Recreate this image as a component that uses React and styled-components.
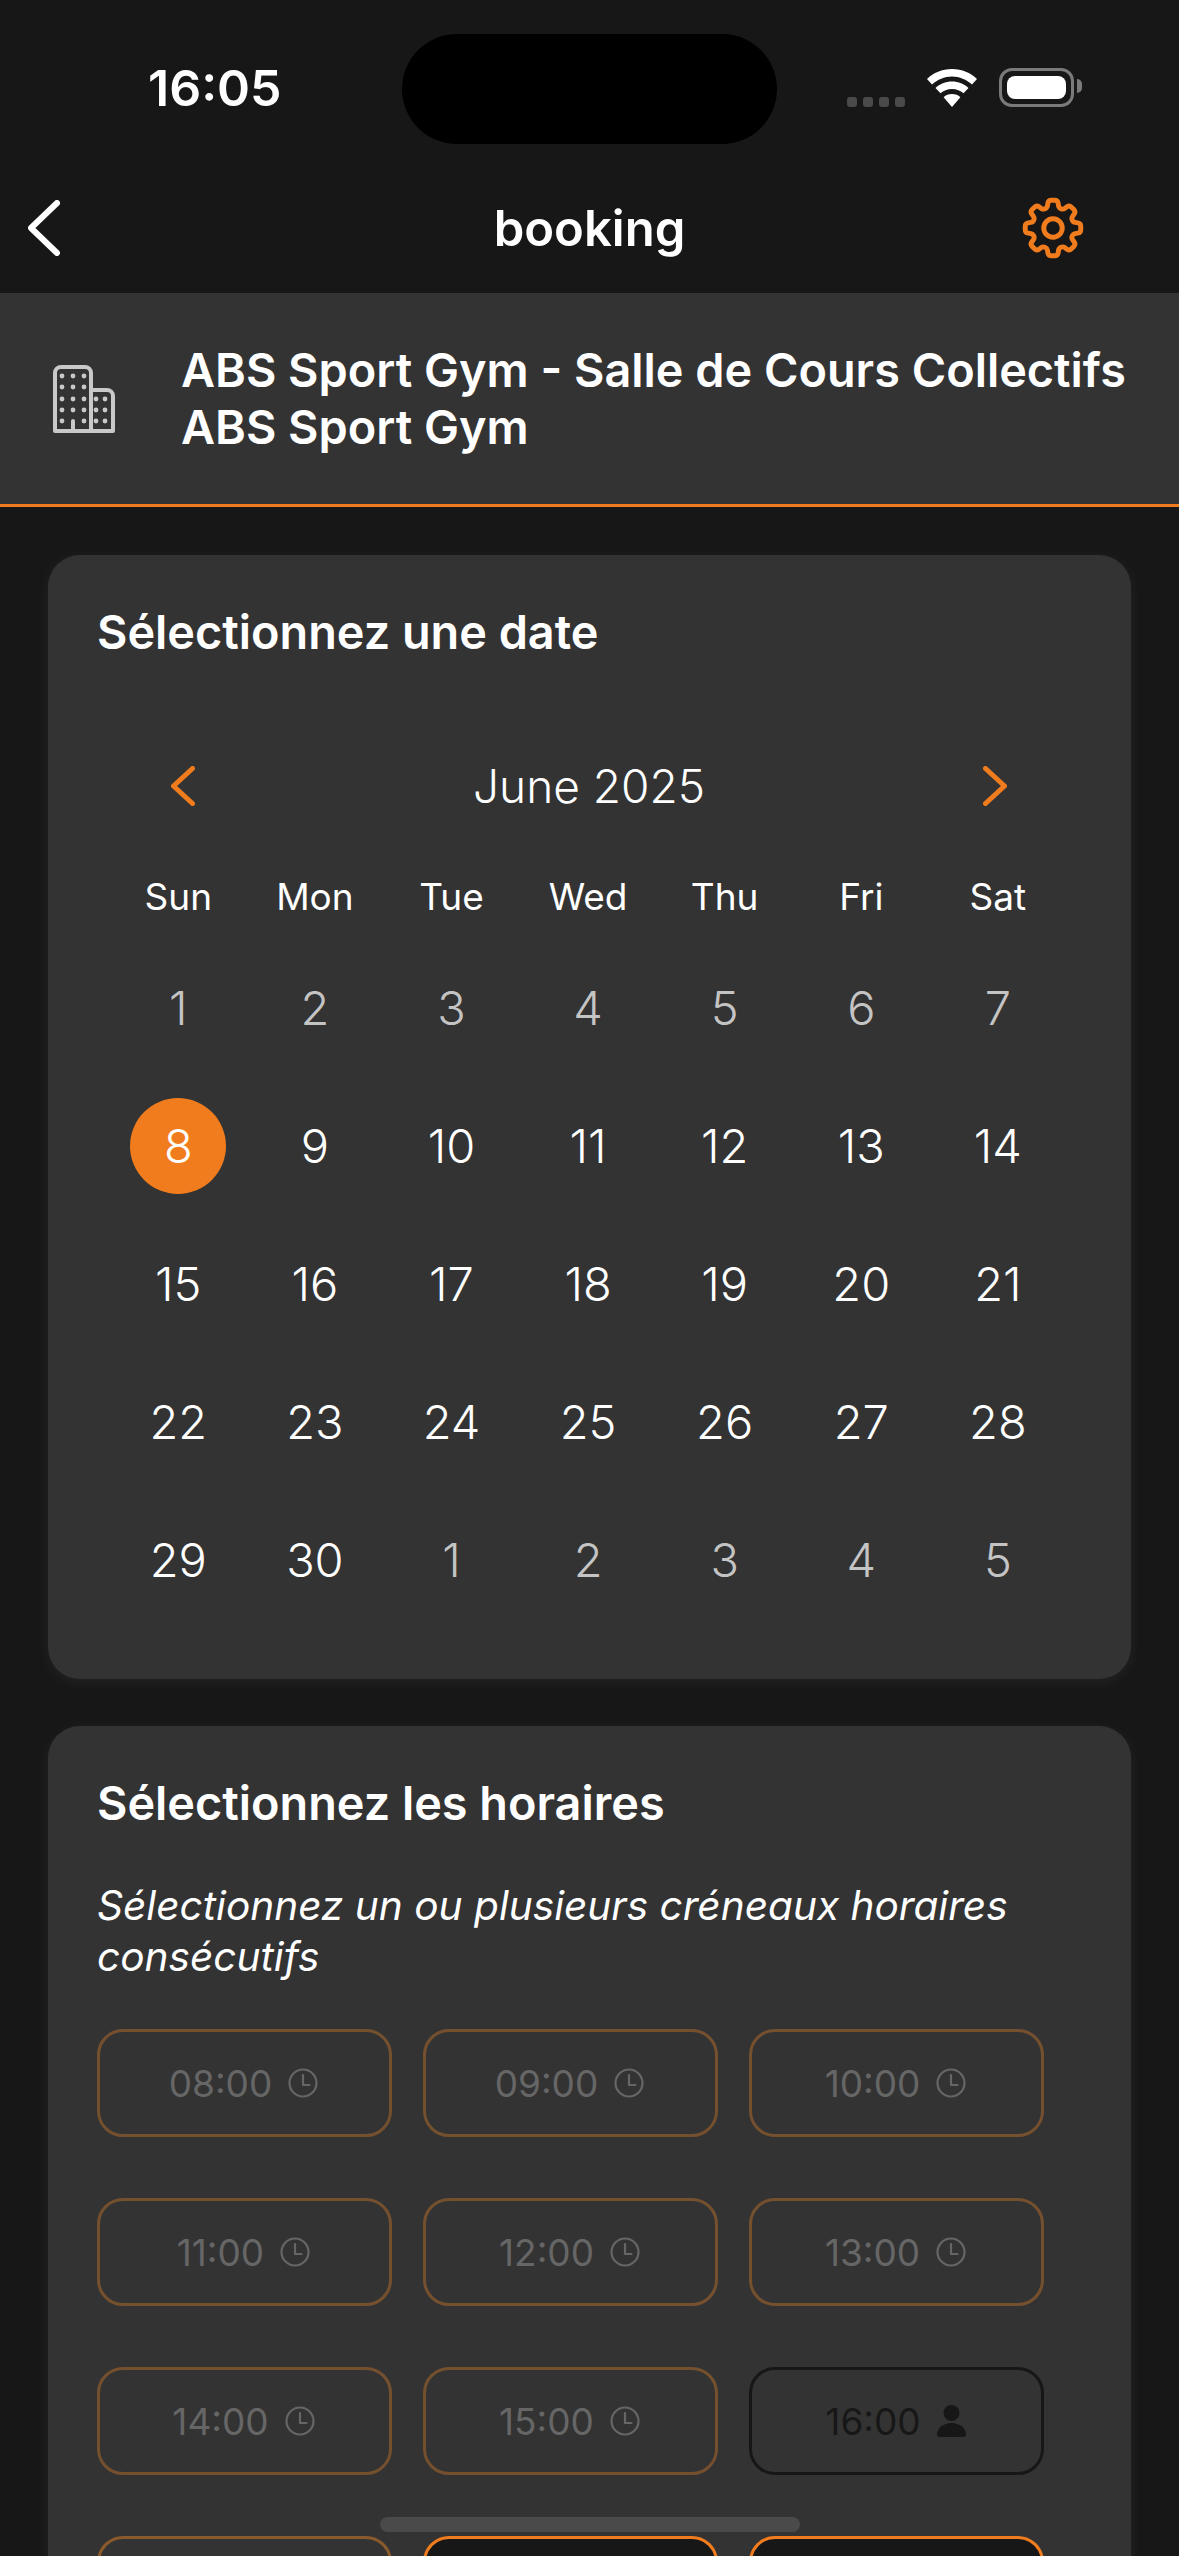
import React from "react";
import styled, { createGlobalStyle } from "styled-components";
import { HiOutlineCog8Tooth } from "react-icons/hi2";

const ORANGE = "#f07c1e";

const GlobalStyle = createGlobalStyle`
    html, body {
        margin: 0;
        padding: 0;
        background: #171717;
    }
    * {
        box-sizing: border-box;
    }
`;

const weekDays = ["Sun", "Mon", "Tue", "Wed", "Thu", "Fri", "Sat"];

const calendarDays = [
    [1, 2, 3, 4, 5, 6, 7].map((d) => ({ d, dim: true })),
    [8, 9, 10, 11, 12, 13, 14].map((d) => ({ d, selected: d === 8 })),
    [15, 16, 17, 18, 19, 20, 21].map((d) => ({ d })),
    [22, 23, 24, 25, 26, 27, 28].map((d) => ({ d })),
    [29, 30].map((d) => ({ d })).concat([1, 2, 3, 4, 5].map((d) => ({ d, dim: true }))),
].flat();

const slots = [
    { time: "08:00" },
    { time: "09:00" },
    { time: "10:00" },
    { time: "11:00" },
    { time: "12:00" },
    { time: "13:00" },
    { time: "14:00" },
    { time: "15:00" },
    { time: "16:00", state: "full" },
    { time: "17:00", state: "next" },
    { time: "18:00", state: "open" },
    { time: "19:00", state: "open" },
];

const WifiIcon = () => (
    <svg width="52" height="38" viewBox="0 0 52 38">
        <path d="M26 0C16 0 7.500 3.800 1 10l5 5.500C11.500 10.500 18.500 7.500 26 7.500s14.500 3 20 8l5-5.500C44.500 3.800 36 0 26 0z" fill="#fff" />
        <path d="M26 12.500c-6.500 0-12.300 2.500-16.500 6.500l5 5.300c3-2.800 7-4.400 11.500-4.400s8.500 1.600 11.500 4.400l5-5.300c-4.200-4-10-6.500-16.500-6.500z" fill="#fff" />
        <path d="M26 25c-3.300 0-6.200 1.200-8.400 3.200L26 38l8.400-9.800C32.200 26.200 29.300 25 26 25z" fill="#fff" />
    </svg>
);

const BuildingIcon = () => {
    const dotRows = [11, 22, 34, 45, 56];
    const dots = [];
    dotRows.forEach((y, r) => {
        [10, 21, 32].forEach((x, c) => {
            if (!(r === 4 && c === 1)) dots.push([x, y]);
        });
        if (r > 1) {
            dots.push([44, y]);
            dots.push([53, y]);
        }
    });
    return (
        <svg width="64" height="68" viewBox="0 0 64 68">
            <path
                d="M3 66V8a6 6 0 0 1 6-6h24a6 6 0 0 1 6 6v58zM39 25h16a6 6 0 0 1 6 6v35H39"
                fill="none"
                stroke="#c9c9c9"
                strokeWidth="4"
                strokeLinejoin="round"
            />
            <path d="M21 65V56" stroke="#c9c9c9" strokeWidth="4" strokeLinecap="round" />
            {dots.map(([x, y]) => (
                <circle key={`${x}-${y}`} cx={x} cy={y} r="2.400" fill="#c9c9c9" />
            ))}
        </svg>
    );
};

const Chevron = ({ dir = "left", color = "#fff", w = 32, h = 56, sw = 6 }) => (
    <svg width={w} height={h} viewBox={`0 0 ${w} ${h}`} fill="none">
        <path
            d={
                dir === "left"
                    ? `M${w - sw / 2} ${sw / 2}L${sw / 2} ${h / 2}L${w - sw / 2} ${h - sw / 2}`
                    : `M${sw / 2} ${sw / 2}L${w - sw / 2} ${h / 2}L${sw / 2} ${h - sw / 2}`
            }
            stroke={color}
            strokeWidth={sw}
            strokeLinecap="round"
            strokeLinejoin="round"
        />
    </svg>
);

const ClockIcon = () => (
    <svg width="30" height="30" viewBox="0 0 30 30" fill="none">
        <circle cx="15" cy="15" r="13.500" stroke="currentColor" strokeWidth="2.200" />
        <path d="M15 7v10h6.500" stroke="currentColor" strokeWidth="2.200" strokeLinecap="round" strokeLinejoin="round" />
    </svg>
);

const PersonIcon = () => (
    <svg width="29" height="32" viewBox="0 0 29 32" fill="currentColor">
        <circle cx="14.500" cy="8" r="8" />
        <path d="M0 29.500C0 23 6.500 18 14.500 18S29 23 29 29.500c0 1.500-1 2.500-2.500 2.500h-24C1 32 0 31 0 29.500z" />
    </svg>
);

export default function App() {
    return (
        <Page>
            <GlobalStyle />
            <TopBar>
                <StatusBar>
                    <Time>16:05</Time>
                    <Island />
                    <StatusIcons>
                        <Signal>
                            <i />
                            <i />
                            <i />
                            <i />
                        </Signal>
                        <WifiIcon />
                        <Battery>
                            <BatteryFill />
                        </Battery>
                    </StatusIcons>
                </StatusBar>
                <NavBar>
                    <BackButton>
                        <Chevron />
                    </BackButton>
                    <NavTitle>booking</NavTitle>
                    <GearButton>
                        <HiOutlineCog8Tooth size={74} color={ORANGE} />
                    </GearButton>
                </NavBar>
            </TopBar>

            <GymPanel>
                <BuildingIcon />
                <GymName>
                    ABS Sport Gym - Salle de Cours Collectifs
                    <br />
                    ABS Sport Gym
                </GymName>
            </GymPanel>

            <Content>
                <Card>
                    <CardTitle>Sélectionnez une date</CardTitle>
                    <MonthRow>
                        <Chevron dir="left" color={ORANGE} w={24} h={40} sw={5} />
                        <MonthLabel>June 2025</MonthLabel>
                        <Chevron dir="right" color={ORANGE} w={24} h={40} sw={5} />
                    </MonthRow>
                    <DayGrid>
                        {weekDays.map((w) => (
                            <WeekDay key={w}>{w}</WeekDay>
                        ))}
                        {calendarDays.map((c, idx) => (
                            <DayCell key={idx}>
                                <DayNumber $dim={c.dim} $selected={c.selected}>
                                    {c.d}
                                </DayNumber>
                            </DayCell>
                        ))}
                    </DayGrid>
                </Card>

                <Card>
                    <CardTitle>Sélectionnez les horaires</CardTitle>
                    <Hint>Sélectionnez un ou plusieurs créneaux horaires consécutifs</Hint>
                    <SlotGrid>
                        {slots.map((s) => (
                            <Slot key={s.time} $state={s.state}>
                                {s.time}
                                {s.state === "full" ? <PersonIcon /> : <ClockIcon />}
                            </Slot>
                        ))}
                    </SlotGrid>
                </Card>
            </Content>

            <HomeBar />
        </Page>
    );
}

const Page = styled.div`
    position: relative;
    width: 1179px;
    height: 2556px;
    overflow: hidden;
    background: #171717;
    color: #fff;
    font-family: Inter, "Liberation Sans", sans-serif;
`;

const TopBar = styled.header`
    height: 293px;
`;

const StatusBar = styled.div`
    position: relative;
    height: 170px;
    display: flex;
    justify-content: space-between;
    align-items: flex-start;
    padding: 60px 105px 0 148px;
`;

const Time = styled.div`
    font-size: 50px;
    line-height: 56px;
    font-weight: 600;
`;

const Island = styled.div`
    position: absolute;
    left: 402px;
    top: 34px;
    width: 375px;
    height: 110px;
    border-radius: 55px;
    background: #000;
`;

const StatusIcons = styled.div`
    display: flex;
    align-items: flex-end;
    gap: 21px;
    padding-top: 8px;
`;

const Signal = styled.div`
    display: flex;
    gap: 6px;

    i {
        width: 10px;
        height: 10px;
        border-radius: 3px;
        background: #4a4a4a;
    }
`;

const Battery = styled.div`
    position: relative;
    width: 75px;
    height: 39px;
    padding: 5px;
    border: 3px solid #7a7a7a;
    border-radius: 13px;

    &::after {
        content: "";
        position: absolute;
        right: -11px;
        top: 8px;
        width: 5px;
        height: 14px;
        border-radius: 0 5px 5px 0;
        background: #7a7a7a;
    }
`;

const BatteryFill = styled.div`
    width: 100%;
    height: 100%;
    border-radius: 8px;
    background: #fff;
`;

const NavBar = styled.div`
    height: 116px;
    display: grid;
    grid-template-columns: 1fr auto 1fr;
    align-items: center;
    padding: 0 96px;
`;

const BackButton = styled.div`
    display: flex;
    margin-left: -68px;
`;

const NavTitle = styled.div`
    font-size: 49px;
    font-weight: 600;
`;

const GearButton = styled.div`
    display: flex;
    justify-self: end;
    width: 60px;
    height: 60px;
    align-items: center;
    justify-content: center;

    svg {
        flex-shrink: 0;
        stroke-width: 1.600;
    }
`;

const GymPanel = styled.section`
    height: 214px;
    display: flex;
    align-items: center;
    gap: 65px;
    padding: 0 0 0 52px;
    background: #333333;
    border-bottom: 3px solid ${ORANGE};
`;

const GymName = styled.div`
    font-size: 46.800px;
    line-height: 57px;
    font-weight: 600;
    white-space: nowrap;
`;

const Content = styled.main`
    display: flex;
    flex-direction: column;
    gap: 47px;
    padding: 48px;
`;

const Card = styled.section`
    padding: 49px 49px 50px;
    background: #333333;
    border-radius: 32px;
    box-shadow: 0 3px 14px rgba(255, 255, 255, 0.06);
`;

const CardTitle = styled.h2`
    margin: 0;
    font-size: 46.800px;
    line-height: 56px;
    font-weight: 600;
`;

const MonthRow = styled.div`
    display: flex;
    justify-content: space-between;
    align-items: center;
    margin-top: 96px;
    padding: 0 75px 0 74px;
    height: 60px;
`;

const MonthLabel = styled.div`
    font-size: 46px;
    font-weight: 300;
`;

const DayGrid = styled.div`
    display: grid;
    grid-template-columns: repeat(7, 136.600px);
    grid-template-rows: 84px;
    grid-auto-rows: 138px;
    margin: 39px 0 0 13px;
`;

const WeekDay = styled.div`
    text-align: center;
    font-size: 37px;
    line-height: 84px;
    font-weight: 400;
`;

const DayCell = styled.div`
    display: flex;
    align-items: center;
    justify-content: center;
`;

const DayNumber = styled.div`
    width: 96px;
    height: 96px;
    display: flex;
    align-items: center;
    justify-content: center;
    padding-bottom: 2px;
    border-radius: 50%;
    font-size: 47px;
    font-weight: 300;
    color: ${(props) => (props.$dim ? "#c4c4c4" : "#fff")};
    background: ${(props) => (props.$selected ? ORANGE : "transparent")};
`;

const Hint = styled.p`
    margin: 49px 0 0;
    font-size: 40.600px;
    line-height: 51px;
    font-style: italic;
    font-weight: 400;
`;

const Slot = styled.div`
    height: 108px;
    display: flex;
    align-items: center;
    justify-content: center;
    gap: 16px;
    font-size: 37px;
    font-weight: 400;
    padding-right: 2px;
    border-radius: 26px;
    color: ${(props) => (props.$state === "full" ? "#171717" : "#666666")};
    border: 3px solid
        ${(props) =>
            props.$state === "full"
                ? "#171717"
                : props.$state === "open"
                  ? ORANGE
                  : props.$state === "next"
                    ? "#8a5a2c"
                    : "#75502f"};
    background: ${(props) => (props.$state === "open" ? "#171717" : "transparent")};
`;

const SlotGrid = styled.div`
    display: grid;
    grid-template-columns: repeat(3, 295px);
    column-gap: 31px;
    row-gap: 61px;
    margin-top: 47px;
`;

const HomeBar = styled.div`
    position: absolute;
    left: 380px;
    top: 2517px;
    width: 420px;
    height: 15px;
    border-radius: 8px;
    background: #4a4a4a;
`;
